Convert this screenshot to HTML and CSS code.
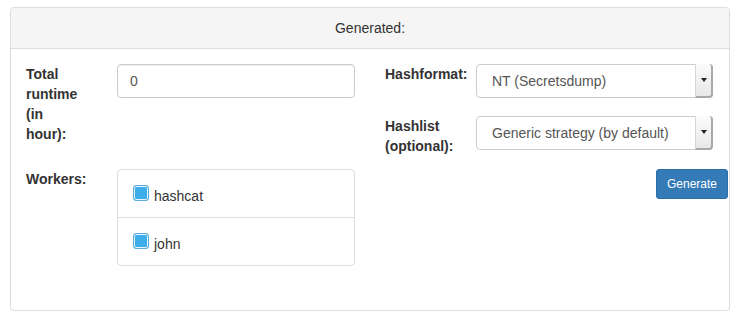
FILE: index.html
```html
<!DOCTYPE html>
<html lang="en">
<head>
  <meta charset="UTF-8" />
  <title>Generated</title>
  <meta name="viewport" content="width=device-width, initial-scale=1.0" />
  <link rel="stylesheet" href="styles.css">
</head>
<body>
  <div class="panel">
    <div class="panel-heading">Generated:</div>
    <div class="panel-body">
      <div class="col">
        <div class="field runtime">
          <label class="control-label narrow"><span>Total runtime (in hour):</span></label>
          <input type="text" class="form-control" value="0" />
        </div>
        <div class="field">
          <label class="control-label">Workers:</label>
          <ul class="list-group">
            <li class="list-item"><span class="check"></span>hashcat</li>
            <li class="list-item"><span class="check"></span>john</li>
          </ul>
        </div>
      </div>

      <div class="col">
        <div class="field hashformat">
          <label class="control-label wide">Hashformat:</label>
          <div class="select">
            <span class="select-value">NT (Secretsdump)</span>
            <span class="select-arrow"></span>
          </div>
        </div>
        <div class="field hashlist">
          <label class="control-label wide">Hashlist (optional):</label>
          <div class="select">
            <span class="select-value">Generic strategy (by default)</span>
            <span class="select-arrow"></span>
          </div>
        </div>
        <div class="actions">
          <button class="btn">Generate</button>
        </div>
      </div>
    </div>
  </div>
</body>
</html>
```

FILE: styles.css
```css
body {
  margin: 0;
  font-family: "Liberation Sans", Arial, sans-serif;
  font-size: 14px;
  line-height: 20px;
  color: #333;
  background: #fff;
}

.panel {
  width: 720px;
  margin: 7px 0 0 10px;
  box-sizing: border-box;
  border: 1px solid #ddd;
  border-radius: 4px;
  box-shadow: 0 1px 1px rgba(0, 0, 0, 0.05);
}

.panel-heading {
  padding: 10px 15px;
  background-color: #f5f5f5;
  border-bottom: 1px solid #ddd;
  border-radius: 3px 3px 0 0;
  text-align: center;
}

.panel-body {
  display: flex;
  gap: 30px;
  padding: 15px;
}

.col {
  width: 329px;
}

.field {
  display: flex;
  align-items: flex-start;
}

.control-label {
  flex: none;
  width: 91px;
  font-weight: bold;
}

.control-label.narrow span {
  display: block;
  width: 58px;
}

.runtime {
  margin-bottom: 25px;
}

.form-control {
  width: 238px;
  height: 34px;
  box-sizing: border-box;
  padding: 6px 12px;
  font: inherit;
  color: #555;
  border: 1px solid #ccc;
  border-radius: 4px;
  box-shadow: inset 0 1px 1px rgba(0, 0, 0, 0.075);
  outline: none;
}

.list-group {
  width: 238px;
  margin: 0 0 29px;
  padding: 0;
  list-style: none;
  border: 1px solid #ddd;
  border-radius: 4px;
  box-sizing: border-box;
}

.list-item {
  display: flex;
  align-items: flex-start;
  height: 47px;
  box-sizing: border-box;
  padding: 16px 15px 0;
}

.list-item + .list-item {
  border-top: 1px solid #ddd;
  height: 48px;
}

.check {
  width: 16px;
  height: 16px;
  margin: -1px 5px 0 0;
  box-sizing: border-box;
  border: 1px solid #5aaad8;
  border-radius: 3px;
  background: #3daee9;
  box-shadow: inset 0 0 0 1px #e8f5fc;
}

.hashformat {
  margin-bottom: 18px;
}

.hashlist {
  margin-bottom: 13px;
}

.control-label.wide {
  padding-right: 5px;
  box-sizing: border-box;
}

.select {
  display: flex;
  width: 237px;
  height: 34px;
  box-sizing: border-box;
  border: 1px solid #ccc;
  border-radius: 4px;
  color: #555;
}

.select-value {
  flex: 1;
  padding-left: 15px;
  line-height: 32px;
  white-space: nowrap;
}

.select-arrow {
  display: flex;
  align-items: center;
  justify-content: center;
  width: 15px;
  margin: -1px -1px -1px 0;
  border-left: 1px solid #d6d6d6;
  border-right: 2px solid #a8a8a8;
  border-bottom: 2px solid #a8a8a8;
  border-radius: 0 4px 4px 0;
  background: linear-gradient(#fbfbfb, #e8e8e8);
}

.select-arrow::after {
  content: "";
  border-left: 3px solid transparent;
  border-right: 3px solid transparent;
  border-top: 4px solid #222;
}

.actions {
  display: flex;
  justify-content: flex-end;
  margin-right: -14px;
}

.btn {
  padding: 5px 10px;
  font-family: inherit;
  font-size: 12px;
  line-height: 18px;
  color: #fff;
  background-color: #337ab7;
  border: 1px solid #2e6da4;
  border-radius: 3px;
  cursor: pointer;
}
```
